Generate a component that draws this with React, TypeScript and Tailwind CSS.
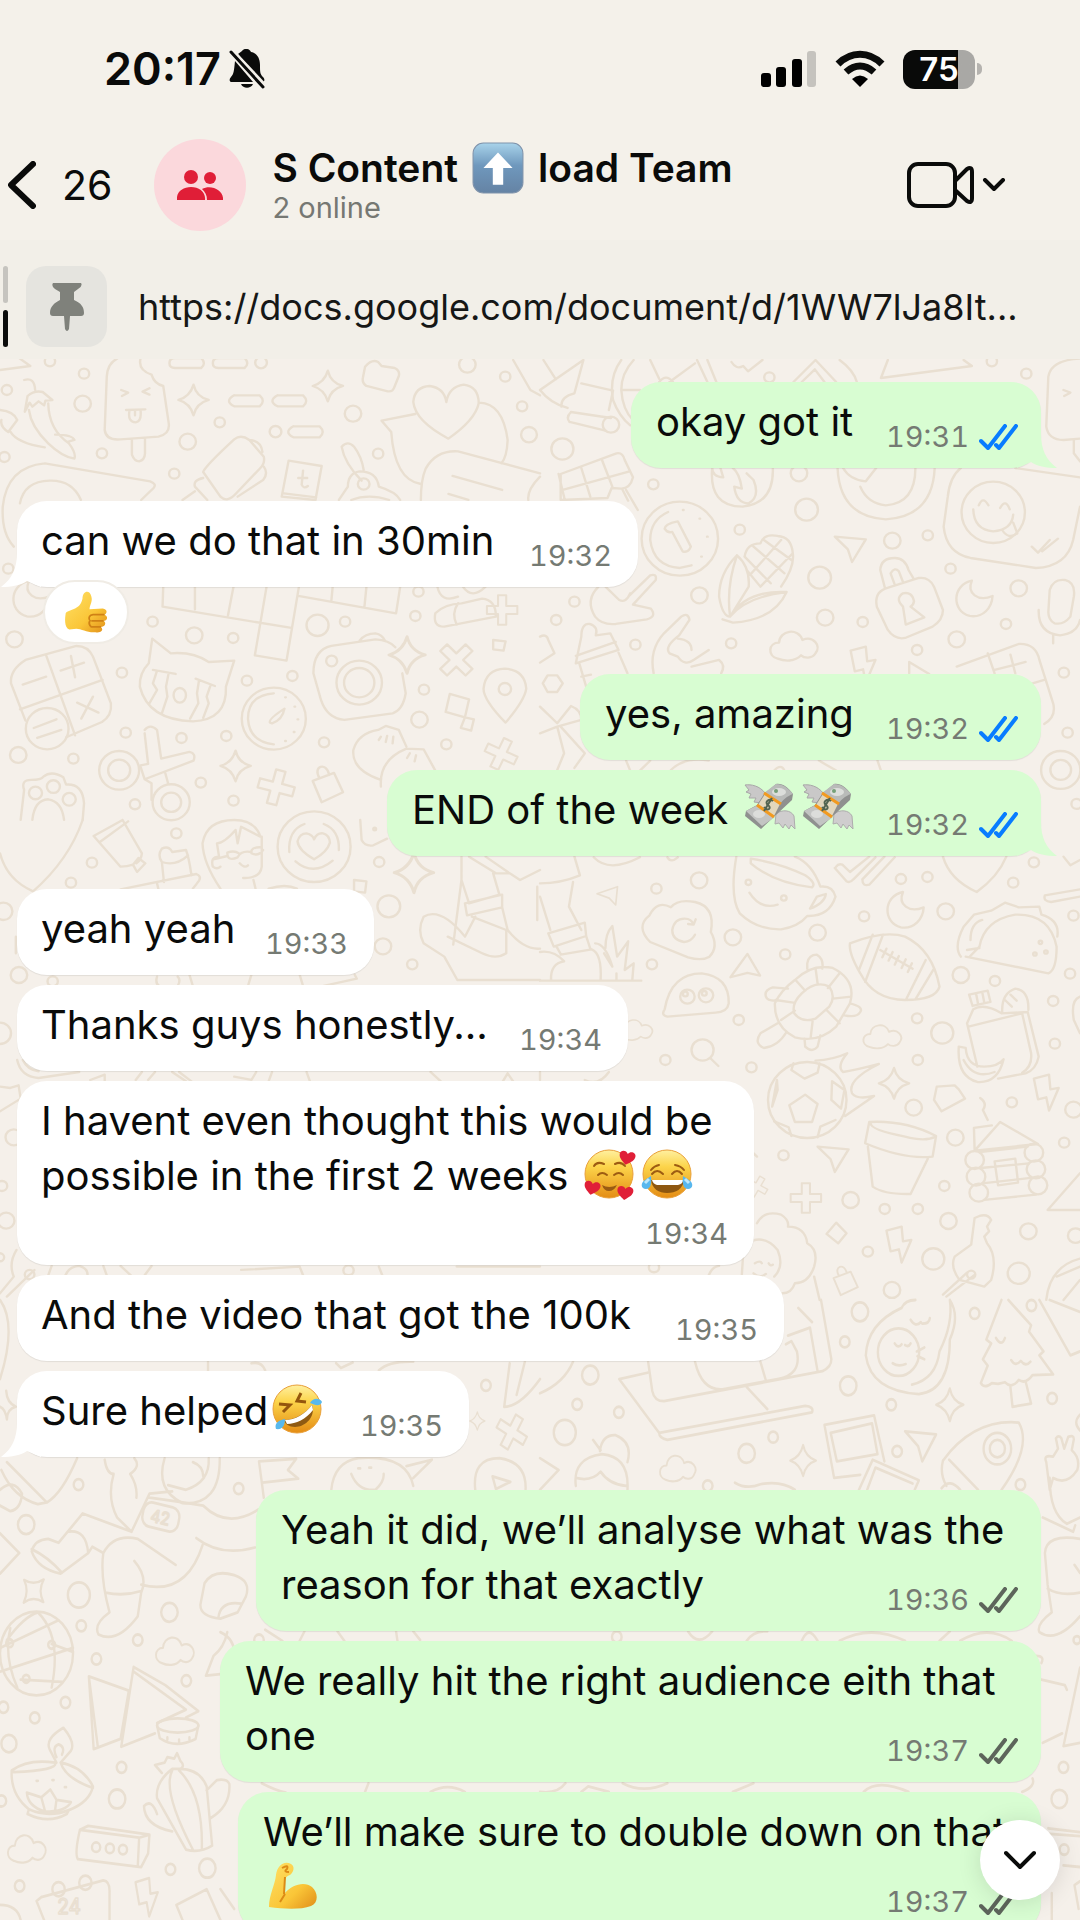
import type { ReactNode } from "react";

type EmojiName = "money" | "hearts" | "joy" | "rofl" | "arm" | "thumb" | "up";

interface Message {
  lines: ReactNode[];
  time: string;
  mine?: boolean;
  read?: boolean;
  tail?: boolean;
  timeBelow?: boolean;
  width?: string;
  reaction?: EmojiName;
}

function Face() {
  return <circle cx="25" cy="25" r="24" fill="url(#face)" stroke="#e9a03a" strokeWidth="1" />;
}

function Heart({ x, y, r }: { x: number; y: number; r: number }) {
  return (
    <path
      transform={`translate(${x} ${y}) rotate(${r})`}
      d="M0 7C-5 3-8 1-8-3C-8-7-2-8 0-4C2-8 8-7 8-3C8 1 5 3 0 7Z"
      fill="#e01f38"
    />
  );
}

const drawings: Record<EmojiName, { label: string; art: ReactNode }> = {
  money: {
    label: "💸",
    art: (
      <g strokeLinejoin="round">
        <path d="M1 2C7 1 16 3 21 10L18 20L10 19L12 15L5 15L7 11L2 9L5 7Z" fill="#c9c8c8" stroke="#a9a8a8" />
        <path d="M32 31C38 26 47 27 50 33L51 46L47 42L45 46L41 41L39 45L35 40L31 41Z" fill="#cfcdce" stroke="#aeadad" />
        <path d="M20 11L32 1C38 0 44 4 49 11L48 17L17 46L1 33L2 28L13 22Z" fill="#8f908f" />
        <path d="M20 10L32 1C39 1 44 5 49 11C43 13 39 17 34 23Z" fill="#b9bbb9" />
        <path d="M2 28L14 22L31 34L18 43Z" fill="#c3c4c3" />
        <ellipse cx="35" cy="9" rx="7" ry="4" fill="#dcdedb" />
        <circle cx="32" cy="8" r="2" fill="#75a078" />
        <ellipse cx="15" cy="31" rx="6" ry="4" fill="#dcdddb" />
        <path d="M21 11L36 21L30 33L14 22Z" fill="#e2d7bd" />
        <path d="M20 10L37 21M13 22L30 34" stroke="#f29a1f" strokeWidth="3" />
        <path d="M29 18C25 15 20 19 24 22C28 25 24 29 20 24M28 15L20 28" fill="none" stroke="#526451" strokeWidth="2" />
      </g>
    ),
  },
  hearts: {
    label: "🥰",
    art: (
      <g>
        <Face />
        <path d="M10 17Q13 12 20 15M31 15Q37 12 41 17M14 26Q18 22 23 26M30 26Q35 22 39 26" fill="none" stroke="#9d5c12" strokeWidth="2" strokeLinecap="round" />
        <path d="M18 36Q25 40 33 36Q30 42 25 42Q20 42 18 36Z" fill="#9a5b13" />
        <Heart x={43} y={9} r={12} />
        <Heart x={8} y={39} r={12} />
        <Heart x={41} y={44} r={8} />
      </g>
    ),
  },
  joy: {
    label: "😂",
    art: (
      <g>
        <Face />
        <path d="M9 21Q12 17 17 16M33 16Q39 17 42 21M10 25Q15 19 21 25M30 25Q35 19 40 25" fill="none" stroke="#9d5c12" strokeWidth="2" strokeLinecap="round" />
        <path d="M9 31H42C41 40 34 44 25 44C17 44 10 40 9 31Z" fill="#8e5710" />
        <path d="M10 31H41Q41 35 36 36H15Q11 35 10 31Z" fill="#fff" />
        <path d="M9 27C10 36 8 40 4 40C-1 40-2 34 3 31ZM41 27C40 36 42 40 46 40C51 40 52 34 47 31Z" fill="#58b7ee" />
        <path d="M7 30L3 34M43 30L47 34" stroke="#bfe8fb" strokeWidth="3" />
      </g>
    ),
  },
  rofl: {
    label: "🤣",
    art: (
      <g>
        <Face />
        <path d="M7 20L18 21L11 28M29 9L25 17L34 18" fill="none" stroke="#94560d" strokeWidth="3" />
        <path d="M12 36C22 36 33 30 40 21C44 32 34 43 23 43C17 43 13 40 12 36Z" fill="#8f5a12" />
        <path d="M13 36C23 36 33 30 40 21L41 26C34 35 24 40 15 40Z" fill="#fff" />
        <path d="M38 19C42 12 49 15 50 18C48 23 43 21 38 19ZM13 35C13 42 10 46 4 45C2 39 7 36 13 35Z" fill="#59b9ed" />
      </g>
    ),
  },
  arm: {
    label: "💪",
    art: (
      <g>
        <path
          d="M2 47C2 35 8 25 9 15C10 6 17 0 24 4C28 6 27 12 23 15C20 16 19 17 18 19L17 34C25 24 38 21 45 27C51 32 52 43 44 46C33 50 17 49 2 47Z"
          fill="url(#skin)"
        />
        <path d="M17 34L18 17M15 8Q22 4 20 9Q16 12 22 12M18 34L13 42" fill="none" stroke="#dc8b15" strokeWidth="2" />
      </g>
    ),
  },
  thumb: {
    label: "👍",
    art: (
      <g>
        <path
          d="M2 26C8 21 18 23 21 10C21 1 29-1 31 7C33 13 29 17 29 22L44 21C50 22 49 27 46 28C51 30 49 35 45 35C49 38 46 42 42 42C46 46 41 49 36 48C27 49 20 44 14 44L6 45C0 42 1 32 2 26Z"
          fill="url(#skin)"
        />
        <path d="M46 28H33Q27 29 29 34M45 35H31M42 42H31Q27 38 30 34" fill="none" stroke="#cf8116" strokeWidth="2" />
      </g>
    ),
  },
  up: {
    label: "⬆️",
    art: (
      <g>
        <rect x="1" y="1" width="48" height="48" rx="10" fill="url(#tile)" stroke="#7f93ab" strokeWidth="1" />
        <path d="M25 10L39 25H30V41H20V25H11Z" fill="#fff" />
      </g>
    ),
  },
};

function Emoji({ name, className = "" }: { name: EmojiName; className?: string }) {
  const { label, art } = drawings[name];
  return (
    <svg viewBox="0 0 50 50" role="img" aria-label={label} className={`inline-block overflow-visible ${className}`}>
      {art}
    </svg>
  );
}

function TextEmoji({ name }: { name: EmojiName }) {
  return <Emoji name={name} className="mx-1 -mt-2 size-[50px] align-[-9px]" />;
}

function Gradients() {
  return (
    <svg aria-hidden className="absolute size-0">
      <defs>
        <linearGradient id="face" x1="0" y1="0" x2="0" y2="1">
          <stop offset="0" stopColor="#fff0a0" />
          <stop offset=".35" stopColor="#fcd44a" />
          <stop offset="1" stopColor="#e48c14" />
        </linearGradient>
        <linearGradient id="skin" x1="0" y1="0" x2="1" y2="1">
          <stop offset="0" stopColor="#ffe066" />
          <stop offset=".6" stopColor="#fac638" />
          <stop offset="1" stopColor="#e08d18" />
        </linearGradient>
        <linearGradient id="tile" x1="0" y1="0" x2="0" y2="1">
          <stop offset="0" stopColor="#a8d3ea" />
          <stop offset=".45" stopColor="#6f98bd" />
          <stop offset="1" stopColor="#6583a4" />
        </linearGradient>
      </defs>
    </svg>
  );
}

/* ---------- wallpaper ---------- */

function Dots({ at }: { at: [number, number, number][] }) {
  return (
    <>
      {at.map(([x, y, r]) => (
        <circle key={`${x}-${y}-${r}`} cx={x} cy={y} r={r} />
      ))}
    </>
  );
}

const shapes = {
  sparkle: "M0-46Q8-10 44 0Q8 10 0 46Q-10 10-44 0Q-10-10 0-46Z",
  cloud: "M-50 38C-80 30-78-10-46-10C-44-48 10-56 22-18C52-32 78-2 60 22C50 40 26 36 18 28C0 48-30 46-50 38Z",
  moon: "M-8-52C-66-40-68 40-14 54C24 60 50 30 52-6C10 12-24-14-8-52Z",
  plus: "M-14-52H14V-14H52V14H14V52H-14V14H-52V-14H-14Z",
  bolt: "M-34-36L10-48L14-4L38-8L10 60L2 20L-22 26Z",
  arrow: "M-46-38L44-30L4 38L-8 0Z",
  lock: "M-42-12L20-36L46 22L-16 52ZM-22-20C-44-56-2-72 6-30",
};

function Shape({ name, x, y, s = 1, r = 0 }: { name: keyof typeof shapes; x: number; y: number; s?: number; r?: number }) {
  return <path transform={`translate(${x} ${y}) rotate(${r}) scale(${s})`} d={shapes[name]} />;
}

function Wallpaper() {
  return (
    <svg
      aria-hidden
      viewBox="0 359 1080 1561"
      preserveAspectRatio="xMidYMin slice"
      className="absolute inset-0 h-full w-full"
      fill="none"
      stroke="#e9dfd1"
      strokeWidth="7"
      strokeLinecap="round"
      strokeLinejoin="round"
    >
      {/* top left */}
      <g transform="translate(0 340) scale(.3444 .3333)">
        <Dots
          at={[
            [145, 64, 15], [244, 101, 15], [20, 150, 15], [240, 191, 24], [638, 247, 15], [545, 305, 24], [296, 340, 15],
            [506, 401, 15], [758, 68, 17], [800, 275, 17], [1025, 221, 24], [1098, 341, 15], [1357, 74, 24], [1467, 110, 15],
            [1516, 199, 15], [1536, 284, 23], [13, 351, 15], [24, 686, 15], [42, 898, 24], [443, 845, 15], [564, 886, 24],
            [677, 894, 15], [922, 856, 32], [1002, 845, 15], [1215, 755, 15], [1206, 828, 15], [354, 998, 15], [717, 1022, 15],
            [849, 1008, 15], [1231, 1049, 15], [1218, 1139, 24], [53, 1245, 24], [213, 1256, 15], [365, 1178, 15],
            [527, 1194, 15], [657, 1188, 15], [941, 1207, 15], [583, 1328, 15], [678, 1382, 15], [392, 1393, 15], [1296, 1213, 15],
          ]}
        />
        <Shape name="sparkle" x={562} y={180} />
        <Shape name="sparkle" x={952} y={138} />
        <Shape name="sparkle" x={1182} y={945} s={1.2} />
        <Shape name="sparkle" x={684} y={1278} />
        <Shape name="plus" x={802} y={1342} r={15} />
        <Shape name="plus" x={1325} y={960} r={45} />
        <Shape name="plus" x={1458} y={810} s={0.85} />
        <Shape name="plus" x={1455} y={1242} s={0.9} r={25} />
        <Shape name="lock" x={950} y={1335} />
        <Shape name="moon" x={92} y={775} />
        <path d="M0 90L88 78L50 50M492 70Q492 54 508 54H584Q600 70 584 84H508Q492 84 492 70M618 70Q618 54 634 54H710Q726 70 710 84H634Q618 84 618 70" />
        <path d="M680 166H754Q772 183 754 199H680Q650 183 680 166M806 166H880Q898 183 880 199H806Q776 183 806 166M852 259H928Q946 276 928 292H852Q822 276 852 259" />
        <path d="M340 56Q312 70 310 110L304 270Q308 302 350 298L460 290Q494 282 490 250L474 138Q448 132 440 104Q400 90 408 56M383 300V344Q390 364 404 364Q420 360 421 340V296M352 150L372 158L354 168M434 145L414 155L434 164M366 210L422 208M376 212Q370 246 394 247Q412 244 408 210M392 212V226" />
        <path d="M70 120Q100 110 102 150M72 215L80 168Q100 150 124 156L152 180L132 182L128 196L112 184L94 200L86 188ZM140 190Q142 270 200 310Q222 340 216 356Q180 350 140 310Q90 260 84 210M0 210Q40 214 50 240L24 276Q0 260 4 240M30 275Q50 310 130 322M160 284Q210 284 216 300L196 306" />
        <path d="M130 370Q20 380 8 500Q4 580 40 620M130 370L436 424Q456 432 446 444L410 480M235 480Q210 420 144 422Q70 424 58 490" />
        <path d="M590 396Q594 380 680 298Q700 282 724 300L766 350Q770 370 756 384L686 460Q660 490 640 470ZM724 300Q758 302 762 336M766 380Q780 400 764 420L690 470M590 414Q560 420 566 440L602 480M530 480L566 454" />
        <path d="M838 362L934 378L916 480L818 470ZM824 460L918 472M866 414L892 414M880 392L876 434Q882 448 894 438M474 738L472 800L846 864M566 740V808M678 740L662 826M774 740L740 946L832 962L868 740M866 768L1150 820L1162 740M966 740L962 784M1064 740L1058 802" />
        <path d="M1010 440Q1010 400 1044 394Q1094 394 1100 440Q1150 456 1162 480M1010 440L984 480M1050 422Q1000 370 992 320Q1010 300 1028 320Q1050 350 1056 390M1020 480Q1070 460 1130 480" />
        <circle cx="1056" cy="432" r="17" />
        <path d="M1060 80Q1080 56 1098 66L1108 78L1146 84Q1162 92 1158 108L1144 144Q1140 156 1126 154L1064 138Q1050 128 1054 112Z" />
        <path d="M1302 296Q1206 244 1200 186Q1204 140 1248 138Q1290 144 1296 186Q1304 140 1346 134Q1390 140 1390 190Q1380 240 1302 296ZM1392 188Q1460 190 1474 300Q1472 350 1456 370M1206 222L1108 242L1136 276Q1146 420 1222 432M1222 480Q1222 420 1236 386Q1266 330 1330 334L1568 400M1568 410Q1530 450 1534 480M1314 408L1458 450M1302 462L1360 480M1490 60L1540 150L1568 166" />
        <path d="M74 960L222 918Q256 918 270 950L322 1090Q326 1126 296 1146L192 1192M74 960Q28 990 32 1030L74 1142M134 946L218 1186M58 1108L298 1020M66 1034L134 1010M206 948L218 1012M176 992L244 968M224 1088L286 1118M270 1070L236 1136M98 1164L164 1138M108 1194L178 1170" />
        <circle cx="137" cy="1166" r="62" />
        <path d="M442 896L496 940Q560 934 606 966L680 962L656 1040Q660 1140 560 1144Q430 1140 406 1040Q404 1000 432 970ZM444 990L510 1002M568 1016L624 1038M456 992L444 1030L456 1050L434 1090M490 998L482 1040L486 1070L470 1120M578 1020L572 1060L576 1090L552 1136M612 1034L600 1070L606 1090L590 1134" />
        <ellipse cx="522" cy="1066" rx="18" ry="22" />
        <circle cx="795" cy="1136" r="93" />
        <path d="M795 1060Q720 1066 720 1136Q724 1206 795 1213M784 1148Q778 1138 826 1106Q820 1140 790 1150ZM828 1072h2M855 1100h2M864 1138h2M853 1176h2M828 1203h2" />
        <path d="M962 918L1090 898Q1130 900 1148 922M1168 1000L1178 1060Q1170 1110 1140 1120L1000 1140Q950 1136 932 1080L910 1000Q910 930 962 918M1044 902Q1060 880 1090 880Q1110 884 1118 902" />
        <circle cx="1043" cy="1028" r="66" />
        <circle cx="1043" cy="1028" r="44" />
        <circle cx="963" cy="963" r="16" />
        <path d="M1468 1148Q1404 1080 1404 1046Q1410 988 1466 986Q1524 990 1528 1046Q1524 1080 1468 1148ZM1306 1062L1362 1078L1350 1132L1294 1116ZM1350 1132L1376 1138L1368 1172L1338 1164ZM1432 900L1468 904L1462 932L1432 928Z" />
        <circle cx="1466" cy="1047" r="18" />
        <path d="M1264 820Q1290 792 1340 790L1400 776Q1440 780 1440 830L1290 860Q1256 860 1264 820ZM1330 790Q1310 820 1326 854M1270 740Q1280 790 1330 770M1344 740Q1370 780 1410 740" />
        <circle cx="346" cy="1291" r="58" />
        <circle cx="346" cy="1291" r="32" />
        <circle cx="497" cy="1387" r="54" />
        <circle cx="497" cy="1387" r="29" />
        <path d="M420 1170Q436 1150 456 1170L468 1256L550 1236Q570 1240 562 1262L420 1318M408 1276L430 1272L420 1180M480 1300L488 1330M408 1280L420 1318L440 1330V1380" />
        <path d="M60 1440L70 1350Q60 1320 90 1320Q120 1320 126 1310Q150 1290 184 1312L192 1334Q240 1330 244 1390L240 1440M94 1440Q100 1380 140 1378Q180 1384 186 1440" />
        <Dots at={[[103, 1359, 19], [155, 1340, 19], [201, 1378, 19]]} />
        <path d="M1106 1320Q1020 1290 1026 1230Q1040 1180 1098 1170L1120 1158L1158 1170L1180 1220M1106 1340Q1100 1260 1180 1226L1230 1228L1264 1292M1100 1200L1106 1190M1120 1206L1124 1188M1140 1210L1142 1190M1182 1254L1190 1240M1204 1264L1208 1246" />
      </g>
      {/* top right */}
      <g transform="translate(540 340) scale(.3444 .3333)">
        <Dots
          at={[
            [666, 112, 15], [1312, 64, 15], [1412, 101, 15], [65, 327, 32], [329, 433, 15], [752, 400, 24], [774, 509, 33],
            [580, 569, 15], [1023, 602, 24], [1126, 586, 15], [812, 713, 33], [463, 766, 24], [100, 785, 15], [47, 840, 15],
            [1192, 686, 15], [1390, 745, 24], [828, 833, 24], [937, 846, 15], [1353, 852, 15], [1210, 898, 24], [555, 910, 15],
            [277, 914, 15], [1095, 930, 15], [1521, 998, 15], [1532, 1178, 15], [1558, 1392, 15], [1512, 1290, 57], [1512, 1290, 30],
          ]}
        />
        <path d="M0 150L126 60L100 160Q60 170 62 200M0 150Q30 190 80 204M120 130L212 152L200 210M90 216L206 234M86 246L190 272M90 216Q74 232 86 246M10 60L46 118" />
        <circle cx="206" cy="254" r="24" />
        <path d="M236 60Q200 110 212 180Q230 230 262 256M272 60Q236 100 236 150Q240 210 270 240M236 150H290M320 60L346 116M450 70L376 126M456 60L486 126M486 60L512 126M346 126Q366 100 386 126M556 66Q570 90 590 78L604 94L646 60M736 126L800 60L860 126M760 126L798 88L826 126M870 60Q910 90 920 126M1010 60L990 114L1254 78L1230 60" />
        <path d="M60 402L222 340Q240 336 246 360L270 412Q262 446 236 446L208 444L196 474L60 480ZM54 402L72 480M120 384L146 470M180 360L210 440M66 450L260 394M250 450L284 510M240 450L256 482" />
        <circle cx="406" cy="596" r="111" />
        <path d="M372 516Q320 540 320 600Q330 680 406 684L440 676M362 566Q362 552 400 544L438 620Q430 640 414 634L384 576Q370 580 362 566M415 510h2M463 536h2M485 590h2M468 650h2" />
        <path d="M500 384Q490 500 588 500Q680 490 676 384M500 384Q500 410 532 412L524 384M560 384Q580 400 586 446L564 440Q570 490 606 490Q640 470 620 420L600 400" />
        <path d="M864 384Q870 530 1004 538Q1140 530 1146 384M930 440Q950 490 1004 496Q1090 490 1090 384M880 384Q900 420 946 424L976 384" />
        <path d="M1222 384Q1190 410 1184 470L1172 560Q1180 640 1250 654L1440 684Q1530 680 1548 600L1568 500M1380 384L1568 412M1428 620L1446 638L1480 600M1458 634L1504 596" />
        <circle cx="1316" cy="517" r="92" />
        <path d="M1258 508Q1260 570 1316 574Q1370 570 1374 524M1274 496Q1286 466 1302 496M1336 504Q1352 474 1364 508M1342 570Q1360 600 1386 580L1374 548" />
        <path d="M572 646Q610 680 606 740L552 830Q530 830 520 770Q520 700 572 646ZM572 646Q540 740 552 830Q600 750 716 756Q680 840 560 848L530 838M716 756Q600 770 552 830M594 650Q600 610 640 610Q650 580 690 588Q730 590 734 640Q740 680 700 740M600 690L640 740M594 650L670 730M620 620L710 700M650 600L730 660M614 700L700 600M640 740L734 640" />
        <path d="M1002 746L1100 714Q1130 710 1144 740L1170 810Q1170 840 1140 860L1060 894Q1030 900 1010 870L978 800Q970 760 1002 746ZM1002 746L988 690Q990 654 1030 654Q1060 654 1070 690L1086 718M1030 734L1018 700Q1030 680 1042 694L1054 726M1054 800Q1030 776 1054 760Q1080 754 1086 784Q1084 796 1076 800L1116 832L1062 854Z" />
        <Shape name="arrow" x={902} y={628} />
        <Shape name="moon" x={1262} y={774} />
        <Shape name="cloud" x={740} y={918} />
        <Shape name="bolt" x={936} y={968} />
        <path d="M1480 750Q1490 716 1524 720Q1556 728 1550 770L1540 830Q1520 856 1494 850Q1476 840 1476 816ZM1448 810Q1446 880 1510 886Q1560 880 1568 840M1490 886V910M1072 1000V966L1130 1002M1210 980L1390 912Q1440 910 1450 960L1490 1090Q1500 1130 1464 1152M1300 940L1320 1000M1320 990L1410 966M1366 944L1380 1000M1430 1030L1464 1020" />
        <path d="M170 740Q130 780 160 830Q180 856 220 852L310 838Q340 830 322 806L270 794L336 720Q340 700 320 706L260 766M190 740L230 780Q250 790 262 760M0 890Q20 880 24 900L42 940L0 968M120 890Q120 850 144 852Q170 860 162 886L204 880L228 930L104 970ZM104 948L220 906M114 970L134 1040M228 938L254 1000M120 1010L148 1004M330 1000Q316 930 360 880L410 830Q430 816 434 840L404 886Q360 920 376 940L400 950M400 896Q440 900 440 930M400 950Q420 980 446 960L490 930M440 980L520 960Q540 976 526 1000" />
        <path d="M22 1006L50 1006L66 1030L50 1056H22L8 1030ZM0 1100L50 1150L90 1098Q120 1110 120 1140L50 1160M0 1180L50 1160L70 1240L50 1290M60 1160L130 1240L100 1284" />
        <path d="M250 1262L262 1292M290 1292L320 1262M380 1290Q420 1250 490 1262M680 1292Q700 1270 710 1292M810 1262L860 1292M980 1262L990 1292" />
        <path d="M1568 56Q1484 60 1476 110L1470 260Q1476 300 1520 300L1568 296M1520 150L1540 158L1522 168M1550 300V340L1568 364" />
      </g>
      {/* middle left */}
      <g transform="translate(0 820) scale(.3444 .3333)">
        <Dots
          at={[
            [512, 40, 15], [267, 128, 15], [206, 188, 15], [10, 274, 26], [55, 465, 24], [153, 484, 15], [1101, 126, 15],
            [1129, 259, 33], [1112, 379, 24], [1197, 433, 15], [0, 640, 32], [40, 952, 24], [6, 1098, 15], [18, 1202, 24],
            [0, 1312, 12], [1012, 1351, 15], [86, 1364, 14], [1088, 27, 4],
          ]}
        />
        <path d="M0 100Q20 180 96 214Q200 120 240 0M272 48L356 0M356 0L412 100Q410 120 396 130M272 48L350 140Q370 140 386 134M290 66L372 4M386 134L402 114L422 130L398 156Z" />
        <path d="M470 86Q490 76 500 96L540 90Q548 110 556 166M470 86Q456 106 470 126L476 186M470 126Q510 140 546 106M350 208L570 162Q590 170 572 190L560 206M456 190L460 208" />
        <path d="M640 206Q590 130 588 70Q600 0 680 0Q740 0 756 50L700 20L690 70L684 30Q650 70 630 70L636 110Q610 110 618 140Q630 150 640 140M760 50V140Q756 176 706 174M736 180L742 206M780 206Q830 190 862 206M696 130Q710 146 720 136M764 90Q750 110 730 100Q726 80 760 82M730 96Q700 90 690 112Q660 126 660 98Q680 90 694 100M660 108L620 118" />
        <circle cx="912" cy="80" r="106" />
        <path d="M912 118Q866 90 864 64Q870 40 890 40Q908 44 912 58Q920 38 938 40Q956 44 958 68Q950 96 912 118ZM840 96Q836 30 884 12M940 12Q986 30 984 90M858 124Q910 170 966 122" />
        <Shape name="sparkle" x={1202} y={158} s={1.3} />
        <path d="M1028 180L1064 184L1060 218L1028 214ZM1046 0L1050 60Q1060 80 1084 76L1124 56" />
        <path d="M1340 110L1340 180L1362 250L1450 224L1432 160L1480 160L1510 180L1568 150M1362 110L1440 160M1410 110L1480 160M1350 250L1458 224V262L1356 286ZM1340 180L1316 374M1380 290L1350 350Q1280 260 1230 290Q1210 330 1230 370L1290 410L1328 480H1568M1370 290L1470 330V400Q1440 420 1400 400L1300 350M1458 262L1474 330Q1520 390 1568 386M1560 200V300" />
        <path d="M50 720Q60 770 112 774L230 756M66 720Q80 750 112 754M262 780L304 764V784M394 780L412 756M430 780L450 756M500 756L540 784M520 756L556 784M680 770L730 780L744 756M790 756L780 784M890 756L900 784M1250 756L1280 784M1460 784L1474 760L1490 784" />
        <path d="M0 800L30 804L54 796L60 836L0 874M46 350V400M550 464L560 498M730 464L720 498M870 464L880 498M940 498L1036 476L1030 464M456 470Q450 490 462 498M516 470Q526 480 516 498" />
        <path d="M48 1290Q24 1330 40 1370L0 1420M100 1350L20 1430M150 1338L140 1366M190 1366Q200 1340 230 1338Q256 1346 254 1366M310 1366L300 1338M350 1338L380 1366M420 1366L440 1338M700 1350L870 1340L880 1366M1100 1340L1110 1366M1326 1340H1568" />
      </g>
      {/* middle right */}
      <g transform="translate(540 820) scale(.3444 .3333)">
        <Dots
          at={[
            [338, 206, 15], [462, 181, 24], [325, 433, 15], [560, 352, 24], [806, 338, 24], [712, 403, 15], [577, 600, 15],
            [364, 720, 15], [614, 742, 15], [941, 289, 15], [1048, 177, 15], [1125, 171, 15], [1178, 274, 24], [1374, 188, 15],
            [1434, 127, 15], [1549, 287, 15], [1539, 461, 15], [1222, 465, 24], [1321, 483, 15], [1095, 595, 15], [1168, 639, 32],
            [1490, 543, 15], [1495, 671, 15], [1097, 720, 15], [1085, 863, 24], [1370, 847, 15], [1549, 869, 24], [1206, 953, 24],
            [1522, 968, 15], [707, 1006, 15], [1174, 1098, 15], [1001, 1167, 15], [1097, 1167, 15], [902, 1140, 24], [1186, 1203, 24],
            [952, 1295, 15], [1142, 1317, 32], [1418, 1234, 24], [1390, 1360, 32], [1555, 1247, 22], [1022, 1410, 24], [331, 1342, 15],
            [1453, 367, 5], [1437, 402, 5], [1469, 396, 5], [605, 187, 8], [708, 234, 8],
          ]}
        />
        <path d="M0 190Q60 190 116 166L100 110M96 186L84 260L120 330M0 230L30 330M24 340L130 308L134 348L40 380ZM48 380L60 402M134 348L146 386M0 396Q40 390 70 424Q30 430 32 480M60 404L150 388Q180 400 176 480M0 482H294M160 370Q190 370 210 440L186 400M190 384Q190 340 210 318L224 410L256 364L246 450L272 430L268 480M222 460V480" />
        <path d="M318 286Q340 240 380 262Q400 236 450 246Q510 260 496 336Q520 380 492 410Q470 424 430 412L320 366Q276 320 318 286ZM450 344Q440 364 418 366Q384 360 384 330Q390 296 420 296Q440 296 446 314L452 298M446 314L430 312" />
        <path d="M570 110Q550 230 580 280Q630 330 700 328Q750 320 776 288Q840 290 858 230Q850 196 814 200Q790 130 740 110M612 116Q700 130 770 166Q804 190 790 202Q680 190 612 130ZM784 266L804 230L830 222Q826 250 784 266ZM608 218Q640 270 690 254" />
        <path d="M860 140Q866 130 878 134L900 156L956 110M856 144L890 184Q900 190 910 178L974 112M1000 110L936 178Q936 200 956 194L1030 112M156 112Q200 160 290 112M370 112Q380 130 400 112M1170 110Q1190 180 1268 216Q1330 170 1354 110M1466 226L1568 208M1466 226Q1460 244 1484 246L1568 230M1520 110L1540 136L1568 120" />
        <Shape name="arrow" x={206} y={232} s={0.7} r={-25} />
        <Shape name="arrow" x={606} y={452} s={0.95} r={-60} />
        <Shape name="arrow" x={852} y={1018} />
        <Shape name="moon" x={1062} y={268} />
        <Shape name="cloud" x={996} y={650} s={0.8} />
        <Shape name="cloud" x={280} y={630} s={0.7} />
        <Shape name="sparkle" x={1028} y={790} />
        <Shape name="plus" x={772} y={1134} s={0.85} />
        <Shape name="plus" x={630} y={1100} s={0.6} r={30} />
        <Shape name="bolt" x={1468} y={812} />
        <Shape name="bolt" x={1040} y={1268} />
        <Shape name="lock" x={886} y={1384} s={0.8} />
        <path d="M900 370Q1000 330 1060 350Q1140 390 1160 500Q1150 540 1060 540Q970 540 930 460Q896 400 900 370ZM966 344L926 450M996 344L944 486M1120 420L1064 536M1144 446L1090 538M988 390L1082 446M1006 386L994 412M1024 396L1012 422M1042 408L1030 434M1062 418L1050 444M1080 430L1068 456" />
        <path d="M1222 410Q1200 380 1230 320L1260 284L1310 272L1350 248L1390 262L1450 260L1456 284Q1510 300 1502 350M1236 410L1476 460Q1500 450 1500 380Q1480 280 1380 284Q1290 300 1276 380L1246 412M1284 300Q1250 310 1250 360M1276 384L1240 390" />
        <path d="M362 568Q380 460 470 460Q550 470 548 550Q544 576 510 578L370 590Q350 586 362 568Z" />
        <Dots at={[[428, 530, 21], [482, 526, 21], [422, 522, 7], [477, 520, 7], [472, 690, 32]]} />
        <path d="M494 714L518 738" />
        <path d="M740 480Q790 430 850 444Q920 480 900 550L860 620Q810 670 740 652Q680 620 682 550Q700 510 740 480ZM760 520Q800 480 840 500Q860 530 840 560L800 596Q760 610 738 580Q730 550 760 520ZM776 446V430Q780 404 804 404Q824 416 820 446M720 506L676 502Q650 510 656 530Q660 544 690 542M900 550Q940 560 930 576Q920 594 884 586M690 610L640 640Q620 670 650 684Q690 680 716 636M768 656L770 680Q790 700 806 680L814 646M800 444L806 490M870 460L836 504M904 530L850 536M870 610L832 570M786 652L792 600M700 600L740 572M684 540L736 548M742 480L770 512" />
        <circle cx="776" cy="840" r="114" />
        <path d="M770 824L806 852L790 906H740L724 856ZM736 730L730 750L768 776L806 758L812 730M688 780L674 860L690 810ZM848 784L846 840L874 866L884 810ZM680 904L722 922L730 948M858 900L814 920L806 952M800 722Q850 720 892 700Q860 740 880 756Q920 750 984 732Q890 780 906 820Q920 840 970 828L886 888" />
        <path d="M956 906Q1060 900 1150 948L1140 1010Q1060 1020 944 970ZM960 910Q960 930 1060 950Q1120 966 1148 950M952 980L966 1100Q1000 1124 1076 1122L1126 1016" />
        <path d="M1240 610L1258 568Q1290 548 1340 580L1416 576L1448 710Q1440 750 1410 760L1330 776M1240 610L1270 740M1244 620L1400 580L1426 700Q1430 740 1400 758M1246 524L1300 512L1308 546L1256 558ZM1266 520L1272 552M1284 516L1290 548M1342 576Q1340 520 1380 506Q1420 510 1418 570M1350 540L1370 560M1366 524L1384 542M1216 680L1236 684Q1240 740 1290 740Q1330 740 1346 718Q1330 790 1270 786Q1210 770 1216 680ZM1230 720Q1260 780 1320 756" />
        <path d="M1152 800L1204 796L1216 808L1234 836L1166 874L1144 840ZM1278 834Q1300 850 1286 870L1300 900M1336 906L1446 972L1262 992ZM1262 992L1260 924L1312 916M1276 996L1416 980M1280 1044L1420 1030M1284 1090L1424 1074M1290 1140L1440 1124M1320 1024L1380 1016L1388 1088L1330 1096Z" />
        <Dots at={[[1262, 1020, 27], [1266, 1070, 27], [1274, 1118, 27], [1434, 998, 27], [1440, 1048, 27], [1446, 1096, 27]]} />
        <path d="M1568 1060L1474 1170H1568M1568 530Q1540 540 1550 600L1568 640M0 756V780M130 780Q170 800 200 756M600 980L630 1010M860 1208L890 1240L866 1270L832 1242Z" />
        <path d="M630 1210Q650 1170 700 1184Q724 1200 720 1220Q770 1220 776 1270Q810 1290 796 1340Q780 1390 740 1390Q730 1420 704 1420M600 1270Q650 1240 690 1290Q710 1340 680 1370M590 1300L586 1366M624 1330Q640 1320 644 1330M664 1330Q670 1340 676 1334M620 1360Q640 1376 656 1362M490 1366Q500 1340 520 1338M796 1370L812 1440" />
        <path d="M1276 1188Q1300 1180 1310 1200L1298 1220L1304 1234L1290 1250L1298 1270Q1330 1310 1310 1380L1290 1400L1218 1380Q1190 1340 1204 1310L1252 1274L1262 1194ZM1260 1366L1180 1430M1240 1358L1170 1424" />
        <circle cx="1252" cy="1364" r="12" />
        <path d="M1568 1316Q1480 1340 1470 1440M1568 1340L1500 1370M1568 1380L1520 1440" />
      </g>
      {/* bottom left */}
      <g transform="translate(0 1300) scale(.3444 .3954)">
        <Dots
          at={[
            [228, 467, 14], [76, 568, 24], [693, 477, 14], [229, 746, 32], [492, 790, 24], [236, 824, 14], [400, 860, 14],
            [280, 908, 14], [541, 963, 14], [10, 1030, 14], [190, 1018, 14], [101, 1057, 14], [26, 1122, 22], [353, 1182, 14],
            [340, 1262, 24], [495, 1440, 14], [602, 1437, 24], [57, 1482, 14], [4, 1267, 14], [1411, 216, 14], [752, 860, 14],
            [279, 1384, 12], [319, 1387, 12], [357, 1390, 12], [28, 868, 10], [150, 872, 10], [76, 958, 10],
          ]}
        />
        <path d="M20 410L136 512Q180 490 224 400M4 430Q40 500 110 516L136 512M0 480Q40 450 64 490Q60 530 30 534L0 520M0 0Q50 60 0 200M18 230Q20 260 46 270Q20 276 20 302Q16 276 0 270" />
        <path d="M304 404Q310 440 330 440Q310 500 340 550L382 586L434 490L500 484M396 500Q400 470 378 440Q410 420 390 400M382 586L240 540L170 614M434 500Q520 510 590 520Q660 580 750 530M200 586Q250 580 256 640L176 692Q110 680 92 636Q100 606 140 604L170 614M256 640L268 624L300 640M180 690Q140 650 92 630M300 640Q330 590 400 604L510 670M300 640Q290 700 318 790Q270 820 286 846Q340 870 400 800L410 740Q430 700 390 660M306 740Q360 750 410 736M410 720Q540 750 588 620M570 602Q640 650 740 626" />
        <path d="M478 400Q450 480 530 514Q640 520 638 400M488 468L540 480Q610 460 606 400M560 410Q590 420 590 446" />
        <rect x="414" y="518" width="106" height="62" rx="24" transform="rotate(12 467 549)" />
        <text x="438" y="566" fontSize="44" strokeWidth="4" transform="rotate(12 467 549)" className="font-['Inter']">
          42
        </text>
        <path d="M766 500L752 408L860 402L836 430L866 452L762 462M962 480Q970 410 1040 400Q1180 390 1200 470M1020 440Q1040 484 1090 480Q1116 460 1114 440M1180 420L1254 404L1200 450M1040 426h6M1072 424h6M1380 480Q1370 400 1450 400Q1530 410 1526 480M1430 446L1482 460L1440 478Z" />
        <Shape name="sparkle" x={98} y={736} r={45} s={0.9} />
        <Shape name="cloud" x={510} y={888} s={0.8} />
        <Shape name="cloud" x={80} y={1388} s={0.8} />
        <Shape name="bolt" x={424} y={1505} s={0.9} />
        <Shape name="plus" x={1486} y={334} s={0.85} r={30} />
        <Shape name="sparkle" x={1386} y={306} s={0.5} />
        <path d="M0 590L56 640L0 692M594 716Q620 680 680 696Q730 710 714 750L690 790L640 806Q580 800 582 770ZM634 804Q640 760 700 768M640 840Q690 860 680 920M660 840Q650 880 620 900L598 950L640 946" />
        <circle cx="106" cy="894" r="106" />
        <path d="M0 880L170 810M0 940L212 880M30 830Q10 900 50 980M110 790Q180 850 150 980M60 960L180 966M20 860Q70 800 110 790M150 870L212 890" />
        <path d="M258 952L374 988L350 1110L272 1136ZM258 952L284 1130M388 928L480 974L576 1040L540 1056M388 928L352 1130L450 1096M388 940L540 1036L456 1070" />
        <ellipse cx="516" cy="1076" rx="60" ry="18" />
        <path d="M456 1076L464 1108Q510 1136 568 1110L576 1076M486 1106v6M520 1112v6M550 1106v6" />
        <path d="M164 1170L144 1136Q130 1110 184 1082Q220 1120 206 1140L176 1170M164 1156Q150 1130 170 1124Q190 1130 180 1150M34 1190Q80 1160 160 1170Q170 1190 40 1194ZM34 1190Q30 1250 84 1288L80 1300Q140 1326 194 1300L200 1290Q260 1270 270 1230Q240 1180 176 1170Q190 1210 270 1234M84 1288Q140 1310 200 1290M78 1246L120 1258L146 1238L164 1264L206 1270Q190 1294 130 1294Q80 1280 78 1246ZM120 1258L130 1290M164 1264L160 1290M106 1216h4M152 1214h4M188 1232h4" />
        <path d="M500 1186Q450 1220 456 1260L540 1390Q580 1400 616 1380L600 1230Q580 1186 520 1186ZM500 1190Q470 1240 560 1390M520 1190Q590 1250 586 1388M456 1300Q440 1260 418 1280Q420 1330 500 1344M600 1240L630 1214Q660 1210 666 1224Q670 1280 612 1310M470 1196L450 1176L478 1170L486 1156L506 1160L514 1146L524 1166Q540 1180 520 1188" />
        <path d="M232 1340L256 1330L434 1352L430 1400L410 1434L226 1414Q216 1400 232 1340ZM232 1340L404 1360L434 1352M404 1360L400 1432" />
        <path d="M120 1510L106 1520L128 1568M120 1510L300 1468Q320 1470 318 1500V1568M0 1530Q50 1530 60 1568M512 1530L600 1490L640 1568M512 1530L530 1568M640 1490L680 1540" />
        <circle cx="170" cy="1490" r="18" />
        <circle cx="248" cy="1474" r="18" />
        <text x="166" y="1554" fontSize="56" strokeWidth="4" className="font-['Inter']">
          24
        </text>
        <path d="M1480 160L1464 270Q1510 270 1568 200M1524 156L1500 240M604 156V180M730 160Q760 154 770 178M976 160L990 172L1024 158M1100 178Q1130 154 1200 156M770 834L820 862M870 862L884 838M980 838L1000 862M1150 838L1154 862M1200 838L1220 860M760 1222Q800 1240 830 1246M1070 1222L1060 1244M1250 1244Q1300 1220 1350 1244" />
      </g>
      {/* bottom right */}
      <g transform="translate(540 1300) scale(.3444 .3954)">
        <Dots
          at={[
            [146, 190, 24], [108, 264, 14], [229, 284, 14], [72, 335, 32], [600, 388, 24], [677, 347, 14], [929, 30, 24],
            [885, 106, 14], [895, 217, 24], [1020, 265, 14], [1262, 34, 14], [1427, 14, 14], [1487, 249, 14], [1037, 383, 14],
            [487, 470, 14], [1395, 467, 14], [1520, 1182, 14], [1508, 1262, 23], [1522, 1390, 13], [1559, 860, 10], [223, 852, 14],
            [1041, 132, 60], [1328, 376, 40], [1328, 376, 22],
          ]}
        />
        <path d="M314 156L326 230Q332 256 360 256L820 180Q846 170 846 150L816 0M312 184L230 200L346 336L770 268Q796 270 790 284L370 354Q346 350 346 336M600 220L660 276M450 156Q470 230 530 226L690 200Q760 190 746 130L730 104L714 112M640 156L656 204M720 90L784 70L806 180M750 20L790 56M0 236Q70 210 96 156" />
        <path d="M1190 0Q1220 40 1190 100Q1190 230 1100 238Q960 230 946 140Q950 60 1050 20Q1060 0 1090 0M1190 0Q1200 60 1160 130Q1150 200 1080 214M1076 50Q1090 70 1106 56M1110 60Q1130 60 1132 46M1030 110Q1040 124 1050 112M1060 114Q1070 120 1076 110M1024 160Q1040 170 1062 162M1094 130L1116 120M1096 142L1116 150" />
        <path d="M1340 0L1296 100L1310 110L1286 150L1300 166L1280 210Q1290 226 1312 210L1330 212L1350 208Q1370 226 1390 202Q1410 214 1430 190L1490 188L1450 140L1462 130L1420 80L1426 64L1360 0M1366 220L1372 270L1426 262L1410 206M1324 96Q1340 120 1350 96M1368 152Q1380 170 1396 154Q1410 170 1424 156" />
        <Shape name="sparkle" x={1190} y={265} s={0.9} />
        <Shape name="sparkle" x={764} y={406} s={0.85} />
        <Shape name="cloud" x={402} y={426} s={0.75} />
        <Shape name="arrow" x={1106} y={370} />
        <path d="M826 316L970 292L1000 408M826 316L854 450L930 442M844 336L964 312L980 390L862 408ZM926 480L966 404L1100 456L1088 480M950 480L974 424L1082 464" />
        <path d="M1170 406Q1260 300 1390 310Q1430 370 1340 480M1170 406Q1160 440 1180 470M1188 404L1272 480M1166 476Q1190 450 1220 480M104 470Q94 400 180 390Q260 396 254 480M104 450Q150 460 176 434Q200 466 250 470M176 380L154 354M174 382Q180 340 220 342Q270 360 254 410M0 400L54 430L0 480M566 462Q600 480 640 466Q700 456 740 480" />
        <path d="M1480 480L1470 410Q1460 390 1490 396L1504 376L1498 350Q1506 340 1514 350L1522 376L1534 346Q1550 340 1550 352L1544 380Q1570 400 1560 430Q1530 470 1490 450ZM1480 450Q1480 540 1530 566L1568 550M1460 550L1548 586L1554 570M1568 604Q1470 590 1466 640L1474 720L1486 790Q1440 820 1450 840Q1500 870 1568 800M1474 730Q1510 750 1568 740M1552 670L1568 690M1456 960L1524 974L1530 986M1568 930L1520 1128L1568 1120M1460 1120L1516 1096M1440 900Q1466 900 1456 918M1476 1336L1568 1346M1480 1350L1568 1356M1520 1430L1568 1434M1568 1470L1552 1480L1564 1540M1486 1500V1568" />
        <path d="M1450 0L1540 140L1568 130M1480 0L1568 30M1568 290Q1546 310 1568 330M430 838Q460 880 500 838M600 862Q620 836 660 838M760 862Q780 820 806 862M870 862Q960 820 1060 862M1160 862L1190 838M1220 862Q1300 820 1370 862M0 1244Q50 1250 74 1222M120 1244L140 1230L200 1244M240 1222Q300 1250 370 1222M560 1244L620 1222M940 1244Q980 1210 1070 1244M1400 1244Q1440 1230 1430 1210" />
      </g>
    </svg>
  );
}

/* ---------- header ---------- */

function StatusBar() {
  return (
    <div className="flex h-[138px] items-center justify-between pl-[104px] pr-[98px]">
      <div className="flex items-center gap-2 text-[45px] font-semibold leading-[54px]">
        <time>20:17</time>
        <svg viewBox="0 0 36 40" className="h-10 w-9" aria-label="Silent" role="img">
          <path
            fill="currentColor"
            d="M9 5L33 33C36 33 36 30 34 28C31 25 31 23 31 16C31 8 27 4 22 3C20-1 15-1 13 2ZM6 12L24 33H3C0 33 0 30 2 28C5 25 5 21 6 12ZM12 35H24C22 40 14 40 12 35Z"
          />
          <path d="M3 3L35 37" stroke="#f4f1ea" strokeWidth="6" />
          <path d="M2 3L34 38" stroke="currentColor" strokeWidth="3" strokeLinecap="round" />
        </svg>
      </div>
      <div className="flex items-center gap-[18px]">
        <svg viewBox="0 0 56 38" className="h-[38px] w-14" aria-label="Signal" role="img">
          <rect x="0" y="23" width="10" height="14" rx="3" />
          <rect x="15" y="17" width="10" height="20" rx="3" />
          <rect x="31" y="9" width="10" height="28" rx="3" />
          <rect x="46" y="1" width="9" height="36" rx="3" fill="#c5c3be" />
        </svg>
        <svg viewBox="0 0 50 38" className="h-[38px] w-[50px]" aria-label="Wi-Fi" role="img">
          <path d="M3 14C16 1 34 1 47 14" fill="none" stroke="currentColor" strokeWidth="7" />
          <path d="M11 22C20 14 30 14 39 22" fill="none" stroke="currentColor" strokeWidth="7" />
          <path d="M25 37L17 29Q25 22 33 29Z" />
        </svg>
        <div className="flex items-center gap-[2px]">
          <div className="flex h-[39px] w-[72px] items-center justify-center rounded-xl bg-linear-to-r from-[#090a09] from-[76%] to-[#a9a8a5] to-[76%] text-[33px] font-semibold leading-none text-white">
            75
          </div>
          <span className="h-3 w-[5px] rounded-r-full bg-[#b5b3af]" />
        </div>
      </div>
    </div>
  );
}

function ChatHeader() {
  return (
    <div className="flex h-[102px] items-center pb-[9px] pl-2 pr-[74px]">
      <button className="flex items-center gap-[26px] text-[41px] leading-[50px]" aria-label="Back, 26 unread">
        <svg viewBox="0 0 28 48" className="h-12 w-7" fill="none" stroke="currentColor" strokeWidth="6" strokeLinecap="round" strokeLinejoin="round">
          <path d="M25 3L3 24L25 45" />
        </svg>
        <span>26</span>
      </button>
      <div className="ml-[42px] flex size-[92px] shrink-0 items-center justify-center rounded-full bg-[#fbd8dc]">
        <svg viewBox="0 0 46 31" className="h-[31px] w-[46px]" fill="#e01e37" aria-hidden>
          <circle cx="14" cy="8" r="7" />
          <circle cx="33" cy="9" r="6" />
          <path d="M0 31C-1 23 6 18 14 18C22 18 29 23 28 31ZM25 20C34 15 47 21 46 31H30C30 26 28 23 25 20Z" />
        </svg>
      </div>
      <div className="ml-[26px] min-w-0 flex-1 pb-[2px]">
        <h1 className="flex items-center gap-[14px] whitespace-nowrap text-[39px] font-semibold leading-12">
          S Content <Emoji name="up" className="-my-1 size-[52px]" /> load Team
        </h1>
        <p className="text-[29px] leading-8 text-[#767873]">2 online</p>
      </div>
      <button className="flex items-center gap-[7px]" aria-label="Video call">
        <svg viewBox="0 0 68 46" className="h-[46px] w-[68px]" fill="none" stroke="currentColor" strokeWidth="4" strokeLinejoin="round">
          <rect x="2" y="2" width="46" height="42" rx="9" />
          <path d="M48 19L60 7Q65 4 65 10V36Q65 42 60 39L48 28" />
        </svg>
        <svg viewBox="0 0 24 14" className="h-[14px] w-6" fill="none" stroke="currentColor" strokeWidth="4" strokeLinecap="round" strokeLinejoin="round">
          <path d="M3 2L12 11L21 2" />
        </svg>
      </button>
    </div>
  );
}

function PinnedMessage() {
  return (
    <div className="flex h-[119px] items-center bg-[#f2efe8] pl-[3px] pr-[60px] pt-[14px]">
      <div className="flex h-[81px] flex-col gap-[7px]">
        <span className="w-[5px] flex-1 rounded-full bg-[#c6c4bf]" />
        <span className="w-[5px] flex-1 rounded-full bg-[#0b0c0b]" />
      </div>
      <div className="ml-[18px] flex size-[81px] shrink-0 items-center justify-center rounded-[20px] bg-[#e5e4df]">
        <svg viewBox="0 0 36 50" className="h-[50px] w-9" fill="#7f817b" aria-hidden>
          <path d="M4 1H32Q34 4 29 7L25 10V18C32 21 35 25 35 31Q35 34 32 34H21L20 47Q18 51 16 47L15 34H4Q1 34 1 31C1 25 5 21 11 18V10L6 7Q2 4 4 1Z" />
        </svg>
      </div>
      <a href="#pinned" className="ml-[31px] whitespace-nowrap text-[36px] leading-[46px] text-[#161716]">
        https://docs.google.com/document/d/1WW7lJa8It...
      </a>
    </div>
  );
}

/* ---------- messages ---------- */

function Ticks({ read }: { read?: boolean }) {
  return (
    <svg
      viewBox="0 0 39 26"
      className={`h-[26px] w-[39px] ${read ? "text-[#087cff]" : "text-[#5d655b]"}`}
      fill="none"
      stroke="currentColor"
      strokeWidth="4"
      strokeLinecap="round"
      strokeLinejoin="round"
      role="img"
      aria-label={read ? "Read" : "Delivered"}
    >
      <path d="M2 17L9 24L26 2M17 21L20 24L37 2" />
    </svg>
  );
}

function Tail({ mine }: { mine?: boolean }) {
  return (
    <svg
      viewBox="0 0 40 34"
      className={`absolute bottom-0 h-[34px] w-10 ${mine ? "-right-4 -scale-x-100 text-[#d8fdd2]" : "-left-4 text-white"}`}
      fill="currentColor"
      aria-hidden
    >
      <path d="M16 0C16 15 11 26 0 34C11 34 20 32 26 28L40 34V0Z" />
    </svg>
  );
}

function Bubble({ message }: { message: Message }) {
  const { lines, time, mine, read, tail, timeBelow, width = "", reaction } = message;
  const stacked = lines.length > 1;
  const overlap = stacked && !timeBelow ? "-mt-8" : "";

  return (
    <li
      className={`relative flex rounded-[30px] pb-[15px] pt-3 shadow-[0_1px_1px_rgba(0,0,0,0.08)] ${
        mine ? "self-end bg-[#d8fdd2] pl-[25px] pr-[23px]" : "self-start bg-white pl-6 pr-[26px]"
      } ${stacked ? "flex-col" : "items-end justify-between"} ${timeBelow ? "gap-[11px]" : ""} ${width}`}
    >
      {tail && <Tail mine={mine} />}
      <p className="relative whitespace-nowrap pb-1 text-[40px] leading-[55px]">
        {lines.map((line, i) => (
          <span key={i} className="block">
            {line}
          </span>
        ))}
      </p>
      <span className={`relative flex items-center gap-[10px] self-end text-[29px] leading-8 tabular-nums text-[#757a73] ${overlap}`}>
        <time>{time}</time>
        {mine && <Ticks read={read} />}
      </span>
      {reaction && (
        <span className="absolute -bottom-[57px] left-[26px] flex h-[64px] w-[86px] items-center justify-center rounded-full border-2 border-[#f0ece5] bg-white">
          <Emoji name={reaction} className="size-[44px]" />
        </span>
      )}
    </li>
  );
}

const groups: { className: string; messages: Message[] }[] = [
  { className: "pt-[23px]", messages: [{ lines: ["okay got it"], time: "19:31", mine: true, read: true, tail: true, width: "w-[410px]" }] },
  { className: "pt-[33px]", messages: [{ lines: ["can we do that in 30min"], time: "19:32", tail: true, reaction: "thumb", width: "w-[621px]" }] },
  {
    className: "pt-[87px]",
    messages: [
      { lines: ["yes, amazing"], time: "19:32", mine: true, read: true, width: "w-[461px]" },
      {
        lines: [
          <>
            END of the week <TextEmoji name="money" />
            <TextEmoji name="money" />
          </>,
        ],
        time: "19:32",
        mine: true,
        read: true,
        tail: true,
        width: "w-[654px]",
      },
    ],
  },
  {
    className: "pt-[33px]",
    messages: [
      { lines: ["yeah yeah"], time: "19:33", width: "w-[357px]" },
      { lines: ["Thanks guys honestly..."], time: "19:34", width: "w-[611px]" },
      {
        lines: [
          "I havent even thought this would be",
          <>
            possible in the first 2 weeks <TextEmoji name="hearts" />
            <TextEmoji name="joy" />
          </>,
        ],
        time: "19:34",
        timeBelow: true,
        width: "w-[737px]",
      },
      { lines: ["And the video that got the 100k"], time: "19:35", width: "w-[767px]" },
      {
        lines: [
          <>
            Sure helped
            <TextEmoji name="rofl" />
          </>,
        ],
        time: "19:35",
        tail: true,
        width: "w-[452px]",
      },
    ],
  },
  {
    className: "pt-[33px]",
    messages: [
      { lines: ["Yeah it did, we’ll analyse what was the", "reason for that exactly"], time: "19:36", mine: true, width: "w-[785px]" },
      { lines: ["We really hit the right audience eith that", "one"], time: "19:37", mine: true, width: "w-[821px]" },
      {
        lines: ["We’ll make sure to double down on that", <TextEmoji name="arm" />],
        time: "19:37",
        mine: true,
        width: "w-[803px]",
      },
    ],
  },
];

export default function App() {
  return (
    <div className="flex h-screen flex-col overflow-hidden bg-[#f5f0ea] font-['Inter',sans-serif] text-[#0a0b0a]">
      <Gradients />
      <header className="shrink-0 bg-[#f4f1ea]">
        <StatusBar />
        <ChatHeader />
        <PinnedMessage />
      </header>
      <main className="relative min-h-0 flex-1 overflow-hidden">
        <Wallpaper />
        <div className="relative pl-[17px] pr-[39px]">
          {groups.map((group, i) => (
            <ul key={i} className={`flex flex-col gap-[10px] ${group.className}`}>
              {group.messages.map((message, j) => (
                <Bubble key={j} message={message} />
              ))}
            </ul>
          ))}
        </div>
        <button
          aria-label="Scroll to latest"
          className="absolute bottom-5 right-5 flex size-20 items-center justify-center rounded-full bg-white shadow-[0_2px_24px_rgba(0,0,0,0.12)]"
        >
          <svg viewBox="0 0 32 20" className="h-5 w-8" fill="none" stroke="currentColor" strokeWidth="4" strokeLinecap="round" strokeLinejoin="round">
            <path d="M2 3L16 17L30 3" />
          </svg>
        </button>
      </main>
    </div>
  );
}
